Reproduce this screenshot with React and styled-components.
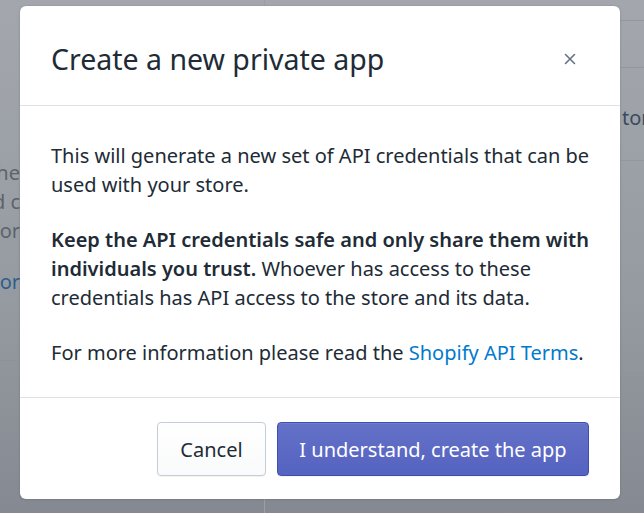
import React from "react";
import styled, { createGlobalStyle } from "styled-components";

const Global = createGlobalStyle`
  html, body { margin: 0; padding: 0; height: 100%; overflow: hidden; }
  body { font-family: "Noto Sans", "Open Sans", sans-serif; }
  * { box-sizing: border-box; }
`;

const Stage = styled.div`
  position: relative;
  width: 644px;
  height: 513px;
  overflow: hidden;
  background: linear-gradient(180deg, #a3a7ad 0%, #959aa1 60%, #858a92 100%);
`;

const BackPage = styled.div`
  display: grid;
  grid-template-columns: 265px 1fr;
  height: 100%;
  font-size: 20px;
`;

const BackColumn = styled.div`
  border-right: 1px solid #9a9ea5;
  padding-top: 158px;
`;

const Fragments = styled.div`
  width: 20px;
  height: 203px;
  overflow: hidden;
  border-bottom: 1px solid #8e939a;
  display: flex;
  flex-direction: column;
`;

const BackLine = styled.div`
  display: flex;
  justify-content: flex-end;
  line-height: 29px;
  height: ${(p) => p.$h || 29}px;
  margin-top: ${(p) => p.$mt || 0}px;
  color: ${(p) => (p.$link ? "#2d5f8c" : "#5d636b")};
  white-space: nowrap;
`;

const RightBack = styled.div`
  display: flex;
  flex-direction: column;
  align-items: flex-end;
`;

const RightCard = styled.div`
  width: 24px;
  height: ${(p) => p.$h}px;
  border-top: ${(p) => (p.$noline ? "none" : "1px solid #93979e")};
  color: #3b4a5c;
  font-size: 20px;
  line-height: 29px;
  padding-top: ${(p) => p.$pt || 0}px;
  padding-left: 2px;
  overflow: hidden;
  white-space: nowrap;
`;

const Modal = styled.div`
  position: absolute;
  left: 20px;
  top: 6px;
  width: 600px;
  height: 493px;
  background: #ffffff;
  border-radius: 6px;
  box-shadow: 0 0 0 1px rgba(63, 63, 68, 0.05), 0 1px 3px rgba(63, 63, 68, 0.15);
  display: flex;
  flex-direction: column;
  color: #212b36;
`;

const Header = styled.div`
  height: 100px;
  flex: none;
  display: flex;
  align-items: center;
  justify-content: space-between;
  padding: 6px 40px 0 31px;
  border-bottom: 1px solid #dfe3e8;
`;

const Title = styled.h2`
  margin: 0;
  font-weight: 400;
  font-size: 28.5px;
  line-height: 36px;
  color: #212b36;
`;

const CloseButton = styled.button`
  border: none;
  background: none;
  padding: 0;
  width: 20px;
  height: 20px;
  display: flex;
  align-items: center;
  justify-content: center;
  cursor: pointer;
`;

const Body = styled.div`
  padding: 35px 26px 30px 31px;
  border-bottom: 1px solid #dfe3e8;
`;

const Para = styled.p`
  margin: 0 0 26px;
  font-size: 20px;
  line-height: 29px;
  color: #212b36;
  &:last-child { margin-bottom: 0; }
`;

const Strong = styled.strong`
  font-weight: 600;
`;

const Link = styled.a`
  color: #007ace;
  text-decoration: none;
`;

const Footer = styled.div`
  display: flex;
  justify-content: flex-end;
  gap: 11px;
  padding: 24px 31px 23px;
`;

const Button = styled.button`
  height: 54px;
  width: ${(p) => p.$w}px;
  border-radius: 4px;
  font-family: inherit;
  font-size: 20px;
  cursor: pointer;
  border: 1px solid ${(p) => (p.$primary ? "#3f4eae" : "#c4cdd5")};
  background: ${(p) =>
    p.$primary
      ? "linear-gradient(180deg, #6371c7, #5563c1)"
      : "linear-gradient(180deg, #ffffff, #f9fafb)"};
  color: ${(p) => (p.$primary ? "#ffffff" : "#212b36")};
  box-shadow: ${(p) =>
    p.$primary
      ? "inset 0 1px 0 0 #6f7bcb, 0 1px 0 0 rgba(22,29,37,0.05)"
      : "0 1px 0 0 rgba(22,29,37,0.05)"};
`;

export default function App() {
  return (
    <>
      <Global />
      <Stage>
        <BackPage>
          <BackColumn>
            <Fragments>
              <BackLine>he</BackLine>
              <BackLine>d c</BackLine>
              <BackLine>or</BackLine>
              <BackLine $link $mt={22}>tor</BackLine>
            </Fragments>
          </BackColumn>
          <RightBack>
            <RightCard $noline $h={20} />
            <RightCard $h={47} />
            <RightCard $h={93} $pt={35}>tor</RightCard>
            <RightCard $h={210} />
            <RightCard $h={110} />
          </RightBack>
        </BackPage>
        <Modal>
          <Header>
            <Title>Create a new private app</Title>
            <CloseButton aria-label="Close">
              <svg width="12" height="12" viewBox="0 0 12 12">
                <path d="M1.5 1.5 L10.5 10.5 M10.5 1.5 L1.5 10.5" stroke="#637381" strokeWidth="1.6" strokeLinecap="round" />
              </svg>
            </CloseButton>
          </Header>
          <Body>
            <Para>
              This will generate a new set of API credentials that can be used with your store.
            </Para>
            <Para>
              <Strong>Keep the API credentials safe and only share them with individuals you trust.</Strong>{" "}
              Whoever has access to these credentials has API access to the store and its data.
            </Para>
            <Para>
              For more information please read the <Link href="#">Shopify API Terms</Link>.
            </Para>
          </Body>
          <Footer>
            <Button $w={109}>Cancel</Button>
            <Button $primary $w={312}>I understand, create the app</Button>
          </Footer>
        </Modal>
      </Stage>
    </>
  );
}
